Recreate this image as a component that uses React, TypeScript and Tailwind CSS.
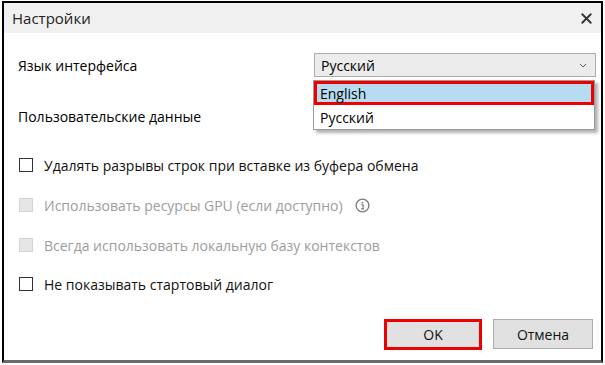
import { X } from 'lucide-react'

const Check = ({ disabled, label, info }: { disabled?: boolean; label: string; info?: boolean }) => (
  <div className="flex h-[20px] items-center">
    <span
      className={
        disabled
          ? 'ml-[15px] size-[14px] border border-[#d4d4d4] bg-[#e6e6e6]'
          : 'ml-[15px] size-[14px] border border-[#333] bg-white'
      }
    />
    <span className={disabled ? 'ml-[11px] text-[#9d9d9d]' : 'ml-[11px] text-[#111]'}>{label}</span>
    {info && (
      <svg className="ml-[12px]" width="15" height="15" viewBox="0 0 16 16">
        <circle cx="8" cy="8" r="6.8" fill="none" stroke="#7a7a7a" strokeWidth="1.4" />
        <circle cx="8" cy="4.9" r="1" fill="#7a7a7a" />
        <path d="M6.6 7.2h2v4.3M6.6 11.5h3" fill="none" stroke="#7a7a7a" strokeWidth="1.3" />
      </svg>
    )}
  </div>
)

export default function App() {
  return (
    <div className="h-[365px] w-[605px] overflow-hidden bg-white pl-[2px] pt-[1px] font-['Open_Sans',sans-serif] text-[14px]">
      <div className="relative h-[362px] w-[601px] border-x-2 border-t-2 border-b-[3px] border-x-black border-t-black border-b-[#6b6b6b] bg-white">
        <div className="flex h-[30px] items-center justify-between bg-[#f0f0f0] pl-[8px] pr-[6px] text-[15px] text-[#222]">
          <span>Настройки</span>
          <X size={17} strokeWidth={2.6} className="text-[#333]" />
        </div>

        <div className="flex h-[48px] items-end justify-between pb-[4px] pr-[5px]">
          <span className="ml-[14px] pb-[1px]">Язык интерфейса</span>
          <div className="flex h-[24px] w-[282px] items-center justify-between border border-[#acacac] bg-[#ececec] pl-[6px] pr-[8px]">
            <span>Русский</span>
            <svg width="8" height="5" viewBox="0 0 8 5">
              <path d="M1 1l3 3 3-3" fill="none" stroke="#666" strokeWidth="1" />
            </svg>
          </div>
        </div>

        <div className="ml-[14px] mt-[25px]">Пользовательские данные</div>

        <div className="mt-[28px] flex flex-col gap-[19px]">
          <Check label="Удалять разрывы строк при вставке из буфера обмена" />
          <div className="mt-[1px]">
            <Check disabled info label="Использовать ресурсы GPU (если доступно)" />
          </div>
          <div className="mt-[1px]">
            <Check disabled label="Всегда использовать локальную базу контекстов" />
          </div>
          <Check label="Не показывать стартовый диалог" />
        </div>

        <div className="mt-[25px] flex justify-end gap-[11px] pr-[8px]">
          <button className="h-[31px] w-[98px] border-[3px] border-[#ee0000] bg-[#e1e1e1] text-[#111]">OK</button>
          <button className="h-[30px] w-[100px] border border-[#adadad] bg-[#e1e1e1] text-[#111]">Отмена</button>
        </div>

        <div className="absolute left-[309px] top-[77px] w-[282px] border border-[#9a9a9a] bg-white shadow-[3px_3px_3px_rgba(0,0,0,0.3)]">
          <div className="flex h-[24px] items-center border-[3px] border-[#ee0000] bg-[#b7dcf0] pl-[3px]">English</div>
          <div className="flex h-[24px] items-center pl-[6px]">Русский</div>
        </div>
      </div>
    </div>
  )
}
